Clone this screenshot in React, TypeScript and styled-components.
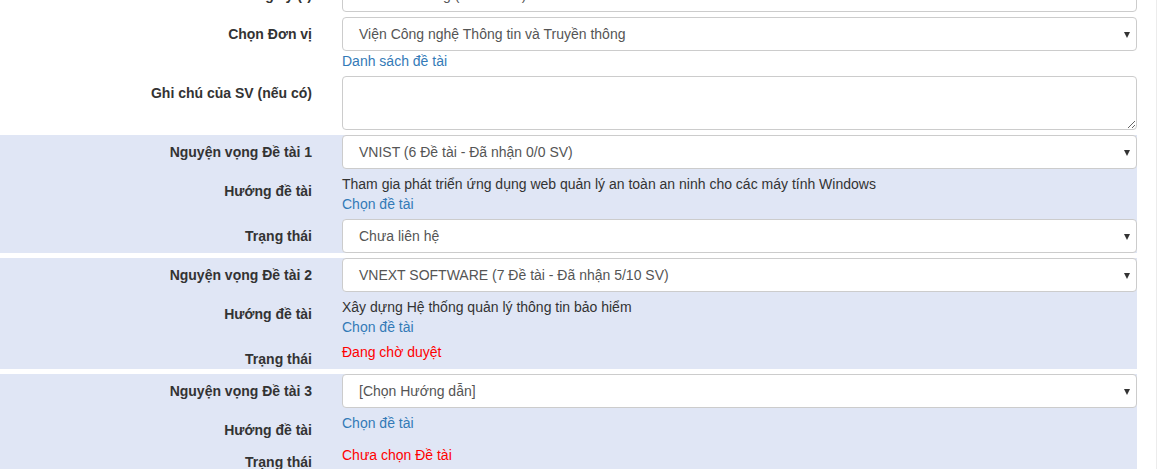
import React from "react";
import styled, { createGlobalStyle } from "styled-components";

const GlobalStyle = createGlobalStyle`
  html, body {
    margin: 0;
    padding: 0;
    background: #ffffff;
    font-family: "Liberation Sans", Arial, sans-serif;
    font-size: 14px;
    line-height: 20px;
    color: #333333;
    overflow: hidden;
  }
  * { box-sizing: border-box; }
`;

const Page = styled.div`
  width: 1157px;
  height: 469px;
  border-right: 1px solid #ececec;
  overflow: hidden;
`;

const Form = styled.div`
  width: 1137px;
  margin-top: -22px;
  display: flex;
  flex-direction: column;
  gap: 5px;
`;

const Section = styled.div`
  background: #e0e6f5;
  display: flex;
  flex-direction: column;
  gap: 5px;
`;

const Row = styled.div`
  display: grid;
  grid-template-columns: 312px 1fr;
  column-gap: 30px;
  align-items: start;
`;

const Label = styled.div`
  padding-top: 7px;
  text-align: right;
  font-weight: bold;
  color: #333333;
  line-height: 20px;
`;

const Control = styled.div`
  display: flex;
  flex-direction: column;
  min-width: 0;
`;

const InputBox = styled.div`
  height: 34px;
  padding: 6px 12px 6px 13px;
  border: 1px solid #cccccc;
  border-radius: 4px;
  background: #ffffff;
  color: #555555;
  line-height: 20px;
  white-space: nowrap;
  overflow: hidden;
`;

const SelectBox = styled.div`
  height: 34px;
  padding: 6px 6px 6px 16px;
  border: 1px solid #cccccc;
  border-radius: 4px;
  background: #ffffff;
  color: #555555;
  line-height: 20px;
  display: flex;
  align-items: center;
  justify-content: space-between;
  white-space: nowrap;
`;

const Arrow = styled.span`
  width: 0;
  height: 0;
  border-left: 3.5px solid transparent;
  border-right: 3.5px solid transparent;
  border-top: 6px solid #333333;
  margin-top: 1px;
`;

const TextArea = styled.textarea`
  display: block;
  width: 100%;
  height: 54px;
  padding: 6px 12px;
  border: 1px solid #cccccc;
  border-radius: 4px;
  background: #ffffff;
  font-family: inherit;
  font-size: 14px;
  line-height: 20px;
  color: #555555;
  resize: vertical;
  margin: 0;
  outline: none;
`;

const Static = styled.div<{ $tone?: "text" | "link" | "danger" }>`
  line-height: 20px;
  color: ${(p) =>
    p.$tone === "link" ? "#337ab7" : p.$tone === "danger" ? "#ff0000" : "#333333"};
  white-space: nowrap;
`;

const Select: React.FC<{ value: string }> = ({ value }) => (
  <SelectBox>
    <span>{value}</span>
    <Arrow />
  </SelectBox>
);

type Wish = {
  n: number;
  choice: string;
  topic?: string;
  status: { kind: "select"; value: string } | { kind: "text"; value: string };
};

const wishes: Wish[] = [
  {
    n: 1,
    choice: "VNIST (6 Đề tài - Đã nhận 0/0 SV)",
    topic: "Tham gia phát triển ứng dụng web quản lý an toàn an ninh cho các máy tính Windows",
    status: { kind: "select", value: "Chưa liên hệ" },
  },
  {
    n: 2,
    choice: "VNEXT SOFTWARE (7 Đề tài - Đã nhận 5/10 SV)",
    topic: "Xây dựng Hệ thống quản lý thông tin bảo hiểm",
    status: { kind: "text", value: "Đang chờ duyệt" },
  },
  {
    n: 3,
    choice: "[Chọn Hướng dẫn]",
    status: { kind: "text", value: "Chưa chọn Đề tài" },
  },
];

export default function App() {
  return (
    <>
      <GlobalStyle />
      <Page>
        <Form>
          <Row>
            <Label>Sinh viên đăng ký (*)</Label>
            <Control>
              <InputBox>Lê Văn Trường (20151234)</InputBox>
            </Control>
          </Row>
          <Row>
            <Label>Chọn Đơn vị</Label>
            <Control>
              <Select value="Viện Công nghệ Thông tin và Truyền thông" />
              <Static $tone="link">Danh sách đề tài</Static>
            </Control>
          </Row>
          <Row>
            <Label>Ghi chú của SV (nếu có)</Label>
            <Control>
              <TextArea rows={2} />
            </Control>
          </Row>
          {wishes.map((w) => (
            <Section key={w.n}>
              <Row>
                <Label>Nguyện vọng Đề tài {w.n}</Label>
                <Control>
                  <Select value={w.choice} />
                </Control>
              </Row>
              <Row>
                <Label>Hướng đề tài</Label>
                <Control>
                  {w.topic && <Static>{w.topic}</Static>}
                  <Static $tone="link">Chọn đề tài</Static>
                </Control>
              </Row>
              <Row>
                <Label>Trạng thái</Label>
                <Control>
                  {w.status.kind === "select" ? (
                    <Select value={w.status.value} />
                  ) : (
                    <Static $tone="danger">{w.status.value}</Static>
                  )}
                </Control>
              </Row>
            </Section>
          ))}
        </Form>
      </Page>
    </>
  );
}
